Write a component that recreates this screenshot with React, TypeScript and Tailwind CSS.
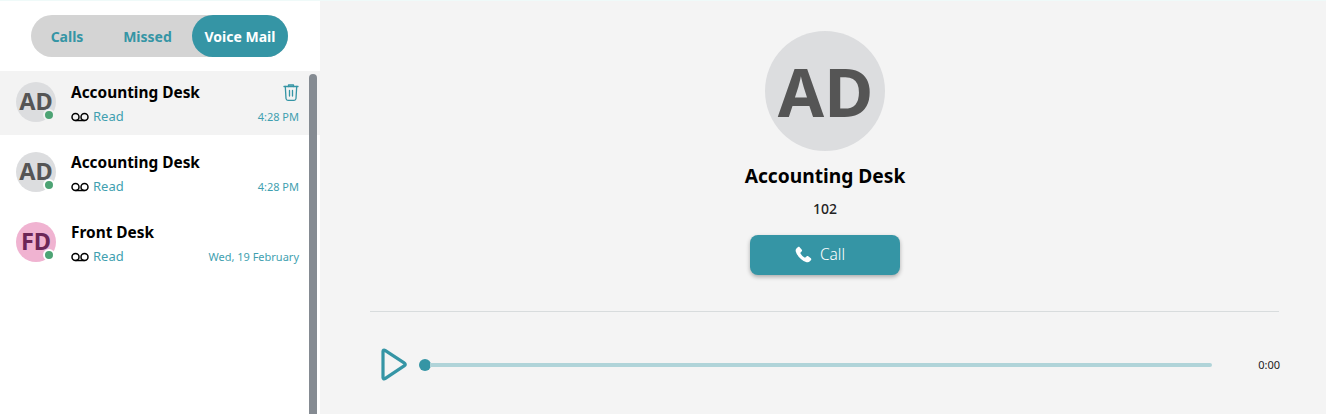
const teal = "text-[#3595a5]";
const tealLight = "text-[#3f9fb0]";

type Row = { initials: string; name: string; time: string; pink?: boolean; active?: boolean };

const rows: Row[] = [
  { initials: "AD", name: "Accounting Desk", time: "4:28 PM", active: true },
  { initials: "AD", name: "Accounting Desk", time: "4:28 PM" },
  { initials: "FD", name: "Front Desk", time: "Wed, 19 February", pink: true },
];

function VoicemailIcon() {
  return (
    <svg width="18" height="10" viewBox="0 0 18 10" fill="none" stroke="black" strokeWidth="1.5">
      <circle cx="4.5" cy="5" r="3.5" />
      <circle cx="13.5" cy="5" r="3.5" />
      <path d="M4.5 8.500h9" />
    </svg>
  );
}

function TrashIcon() {
  return (
    <svg width="16" height="18" viewBox="0 0 16 18" fill="none" stroke="#3595a5" strokeWidth="1.3" strokeLinecap="round" strokeLinejoin="round">
      <path d="M1 2.500h14" />
      <path d="M5.500 2.500V1h5v1.500" />
      <path d="M2.300 2.500l.7 12a2 2 0 0 0 2 1.800h6a2 2 0 0 0 2-1.800l.7-12" />
      <path d="M6.500 6.500v5.500M9.500 6.500v5.500" />
    </svg>
  );
}

function ContactRow({ row }: { row: Row }) {
  return (
    <div className={`flex h-16 items-start pl-4 pr-[21px] pt-[9px] ${row.active ? "bg-[#f3f3f3]" : "bg-white"}`}>
      <div
        className={`relative mt-[2px] flex h-10 w-10 shrink-0 items-center justify-center rounded-full text-[23.5px] font-bold ${
          row.pink ? "bg-[#f0b3d1] text-[#6b2657]" : "bg-[#dcdddf] text-[#555555]"
        }`}
      >
        {row.initials}
        <span
          className={`absolute bottom-[1px] right-[1px] h-3 w-3 rounded-full border-2 bg-[#4da374] ${
            row.active ? "border-[#f3f3f3]" : "border-white"
          }`}
        />
      </div>
      <div className="ml-[15px] min-w-0 flex-1">
        <div className="flex h-[26px] items-center justify-between">
          <span className="text-[15.4px] font-bold text-black">{row.name}</span>
          {row.active && <TrashIcon />}
        </div>
        <div className="mt-[1px] flex h-5 items-center">
          <VoicemailIcon />
          <span className={`ml-[4px] text-[13px] ${tealLight}`}>Read</span>
          <span className={`ml-auto text-[11px] ${tealLight}`}>{row.time}</span>
        </div>
      </div>
    </div>
  );
}

export default function App() {
  return (
    <div className="flex h-[414px] w-[1326px] overflow-hidden border-t border-[#effaf9] bg-[#f4f4f4] font-['Noto_Sans','Open_Sans',sans-serif]">
      <aside className="flex w-[320px] shrink-0 flex-col bg-white">
        <div className="flex justify-center pr-[1px] pt-[14px]">
          <div className="flex h-[42px] w-[257px] items-center rounded-full bg-[#d4d4d4] text-[14px] font-bold">
            <span className={`w-[72px] text-center ${teal}`}>Calls</span>
            <span className={`w-[89px] text-center ${teal}`}>Missed</span>
            <span className="flex h-full w-[96px] items-center justify-center rounded-full bg-[#3595a5] text-white">
              Voice Mail
            </span>
          </div>
        </div>
        <div className="relative mt-[14px] flex flex-1 flex-col gap-[6px]">
          {rows.map((row, i) => (
            <ContactRow key={i} row={row} />
          ))}
          <div className="absolute bottom-0 right-[3px] top-[3px] w-2 rounded-t-full bg-[#858b92]" />
        </div>
      </aside>

      <main className="flex min-w-0 flex-1 flex-col items-center pl-1 pt-[30px]">
        <div className="flex h-[120px] w-[120px] items-center justify-center rounded-full bg-[#dcdddf] pl-px text-[67px] font-bold text-[#555555]">
          AD
        </div>
        <h1 className="mt-[11px] text-[19.2px] font-bold text-black">Accounting Desk</h1>
        <p className="mt-[7px] text-[14px] font-medium text-[#222222]">102</p>
        <button className="mt-4 flex h-10 w-[150px] items-center justify-center gap-2 rounded-lg bg-[#3595a5] pr-[10px] text-[15.5px] font-light text-white shadow-[0_2px_4px_rgba(0,0,0,0.3)]">
          <svg width="17" height="17" viewBox="0 0 24 24" fill="white">
            <path d="M6.600 1.600c-.6-.7-1.600-.8-2.300-.3L2.300 3C1 4.100.6 5.900 1.100 7.600c2.300 7.200 8 12.900 15.300 15.300 1.700.5 3.500.1 4.600-1.200l1.700-2c.5-.7.4-1.700-.3-2.300l-3.700-3c-.6-.5-1.500-.5-2.100 0l-2 1.700c-.4.3-.9.400-1.300.1-2.300-1.400-4.200-3.300-5.500-5.600-.3-.4-.2-1 .1-1.300l1.700-2c.5-.6.5-1.500 0-2.100z" />
          </svg>
          Call
        </button>
        <div className="mr-px mt-9 h-px w-[909px] bg-[#d8dcdd]" />
        <div className="mr-px mt-[37px] flex h-8 w-[909px] items-center pl-[11px]">
          <svg width="27" height="33" viewBox="0 0 27 33" fill="none" stroke="#3595a5" strokeWidth="3.200" strokeLinejoin="round">
            <path d="M2 3.500c0-1.200 1-1.800 2-1.200l19.500 12.800c1 .6 1 2 0 2.600L4 30.700c-1 .6-2 0-2-1.200z" />
          </svg>
          <div className="ml-[11px] flex flex-1 items-center">
            <div className="h-3 w-3 shrink-0 rounded-full bg-[#3595a5]" />
            <div className="ml-[-1px] h-1 flex-1 rounded-r-full bg-[#b0d4d9]" />
          </div>
          <span className="ml-[46px] mr-[-1px] text-[11px] text-[#222222]">0:00</span>
        </div>
      </main>
    </div>
  );
}
